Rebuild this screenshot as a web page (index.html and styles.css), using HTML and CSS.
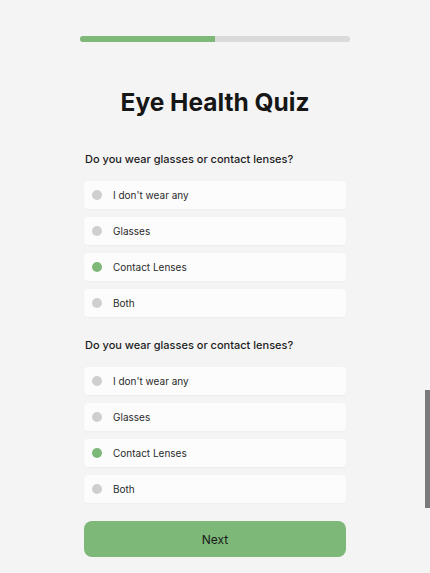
FILE: index.html
```html
<!DOCTYPE html>
<html lang="en">
<head>
<meta charset="utf-8">
<title>Eye Health Quiz</title>
<link rel="stylesheet" href="styles.css">
</head>
<body>
<main class="quiz">
  <div class="progress"><div class="progress-fill"></div></div>
  <h1 class="title">Eye Health Quiz</h1>

  <section class="question">
    <h2 class="question-text">Do you wear glasses or contact lenses?</h2>
    <ul class="options">
      <li class="option"><span class="dot"></span><span class="label">I don't wear any</span></li>
      <li class="option"><span class="dot"></span><span class="label">Glasses</span></li>
      <li class="option"><span class="dot dot-selected"></span><span class="label">Contact Lenses</span></li>
      <li class="option"><span class="dot"></span><span class="label">Both</span></li>
    </ul>
  </section>

  <section class="question">
    <h2 class="question-text">Do you wear glasses or contact lenses?</h2>
    <ul class="options">
      <li class="option"><span class="dot"></span><span class="label">I don't wear any</span></li>
      <li class="option"><span class="dot"></span><span class="label">Glasses</span></li>
      <li class="option"><span class="dot dot-selected"></span><span class="label">Contact Lenses</span></li>
      <li class="option"><span class="dot"></span><span class="label">Both</span></li>
    </ul>
  </section>

  <button class="next">Next</button>
</main>
<div class="scroll-thumb"></div>
</body>
</html>
```
FILE: styles.css
```css
html, body {
  margin: 0;
  padding: 0;
  background: #f4f4f4;
  font-family: Inter, "Noto Sans", sans-serif;
  color: #1a1a1a;
  overflow: hidden;
}

.quiz {
  width: 270px;
  margin: 0 auto;
  padding-top: 36px;
  display: flex;
  flex-direction: column;
}

.progress {
  height: 6px;
  border-radius: 3px;
  background: #dadada;
  overflow: hidden;
}

.progress-fill {
  width: 50%;
  height: 100%;
  background: #7db879;
}

.title {
  margin: 44px 0 0;
  font-size: 24.5px;
  line-height: 32px;
  font-weight: 700;
  text-align: center;
  color: #161616;
}

.question {
  margin-top: 33px;
}

.question + .question {
  margin-top: 20px;
}

.question-text {
  margin: 0 0 14px 5px;
  font-size: 11px;
  line-height: 16px;
  font-weight: 500;
  color: #1c1c1c;
}

.options {
  list-style: none;
  margin: 0 4px;
  padding: 0;
  display: flex;
  flex-direction: column;
  gap: 8px;
}

.option {
  height: 28px;
  display: flex;
  align-items: center;
  gap: 11px;
  padding-left: 8px;
  background: #fcfcfc;
  border-radius: 4px;
  box-shadow: 0 1px 2px rgba(0, 0, 0, 0.03);
}

.dot {
  width: 10px;
  height: 10px;
  border-radius: 50%;
  background: #cfcfcf;
  flex: none;
}

.dot-selected {
  background: #7db879;
}

.label {
  font-size: 10px;
  color: #2a2a2a;
}

.next {
  margin: 18px 4px 0;
  height: 36px;
  border: none;
  border-radius: 8px;
  background: #7db879;
  font-family: Inter, "Noto Sans", sans-serif;
  font-size: 12px;
  color: #1a1a1a;
  cursor: pointer;
}

.scroll-thumb {
  position: fixed;
  right: 0;
  top: 390px;
  width: 5px;
  height: 118px;
  background: #7a7a7a;
}
```
